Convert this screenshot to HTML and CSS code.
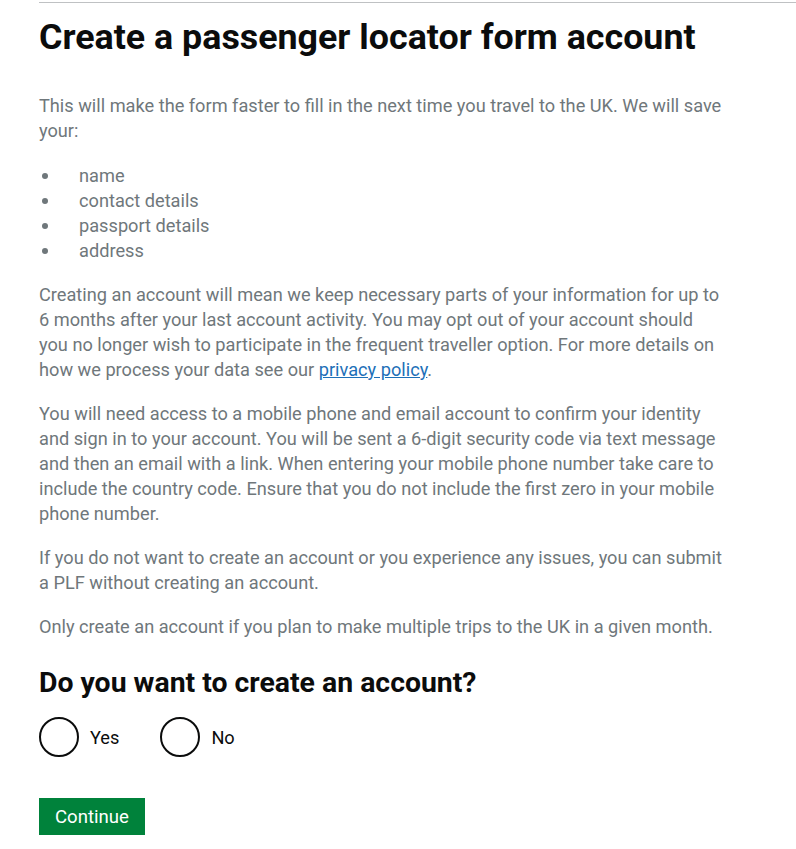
FILE: index.html
```html
<!DOCTYPE html>
<html lang="en">
<head>
    <meta charset="UTF-8">
    <meta name="viewport" content="width=device-width, initial-scale=1.0">
    <title>Create a passenger locator form account</title>
    <link rel="stylesheet" href="styles.css">
</head>
<body>
    <main class="page">
        <div class="column">
            <h1 class="page-title">Create a passenger locator form account</h1>

            <p class="body-text">This will make the form faster to fill in the next time you travel to the UK. We will save your:</p>

            <ul class="bullet-list">
                <li>name</li>
                <li>contact details</li>
                <li>passport details</li>
                <li>address</li>
            </ul>

            <p class="body-text">Creating an account will mean we keep necessary parts of your information for up to 6 months after your last account activity. You may opt out of your account should you no longer wish to participate in the frequent traveller option. For more details on how we process your data see our <a class="link" href="#">privacy policy</a>.</p>

            <p class="body-text">You will need access to a mobile phone and email account to confirm your identity and sign in to your account. You will be sent a 6-digit security code via text message and then an email with a link. When entering your mobile phone number take care to include the country code. Ensure that you do not include the first zero in your mobile phone number.</p>

            <p class="body-text">If you do not want to create an account or you experience any issues, you can submit a PLF without creating an account.</p>

            <p class="body-text">Only create an account if you plan to make multiple trips to the UK in a given month.</p>

            <!-- Pregunta -->
            <form class="question">
                <h2 class="question-title">Do you want to create an account?</h2>
                <div class="radios">
                    <label class="radio">
                        <input type="radio" name="account" value="yes">
                        <span class="radio-circle"></span>
                        <span class="radio-label">Yes</span>
                    </label>
                    <label class="radio">
                        <input type="radio" name="account" value="no">
                        <span class="radio-circle"></span>
                        <span class="radio-label">No</span>
                    </label>
                </div>
                <button type="button" class="button">Continue</button>
            </form>
        </div>
    </main>
</body>
</html>
```

FILE: styles.css
```css
:root {
    --text: #0b0c0c;
    --secondary: #6f777b;
    --border: #bfc1c3;
    --link: #1d70b8;
    --green: #00823b;
    --green-dark: #003618;
}

* {
    box-sizing: border-box;
}

body {
    margin: 0;
    padding: 0;
    background: white;
    color: var(--text);
    font-family: 'Roboto', 'Lato', sans-serif;
}

.page {
    margin: 2px 0 0 39px;
    border-top: 1px solid var(--border);
    padding-top: 14px;
}

.column {
    width: 686px;
}

.page-title {
    margin: 0 0 36px;
    font-size: 35.8px;
    line-height: 40px;
    font-weight: 700;
}

.body-text {
    margin: 0 0 19px;
    font-size: 18.2px;
    line-height: 25px;
    color: var(--secondary);
}

.link {
    color: var(--link);
    text-decoration: underline;
}

.bullet-list {
    margin: 0 0 19px;
    padding: 1px 0 0 40px;
    font-size: 18.2px;
    line-height: 25px;
    color: var(--secondary);
    list-style: none;
}

.bullet-list li {
    position: relative;
}

.bullet-list li::before {
    content: "";
    position: absolute;
    left: -37px;
    top: 10px;
    width: 6px;
    height: 6px;
    border-radius: 50%;
    background: var(--secondary);
}

.question {
    margin-top: 29px;
}

.question-title {
    margin: 0 0 19px;
    font-size: 28.4px;
    line-height: 30px;
    font-weight: 700;
}

.radios {
    display: flex;
    gap: 41px;
    margin-bottom: 41px;
}

.radio {
    display: flex;
    align-items: center;
    gap: 11px;
    cursor: pointer;
}

.radio input {
    display: none;
}

.radio-circle {
    width: 40px;
    height: 40px;
    border: 2px solid var(--text);
    border-radius: 50%;
}

.radio-label {
    font-size: 18.2px;
    line-height: 25px;
    color: var(--text);
}

.button {
    background: var(--green);
    color: white;
    border: none;
    padding: 7px 16px 5px;
    font-family: inherit;
    font-size: 18.6px;
    line-height: 25px;
    box-shadow: 0 2px 0 var(--green-dark);
    cursor: pointer;
}
```
